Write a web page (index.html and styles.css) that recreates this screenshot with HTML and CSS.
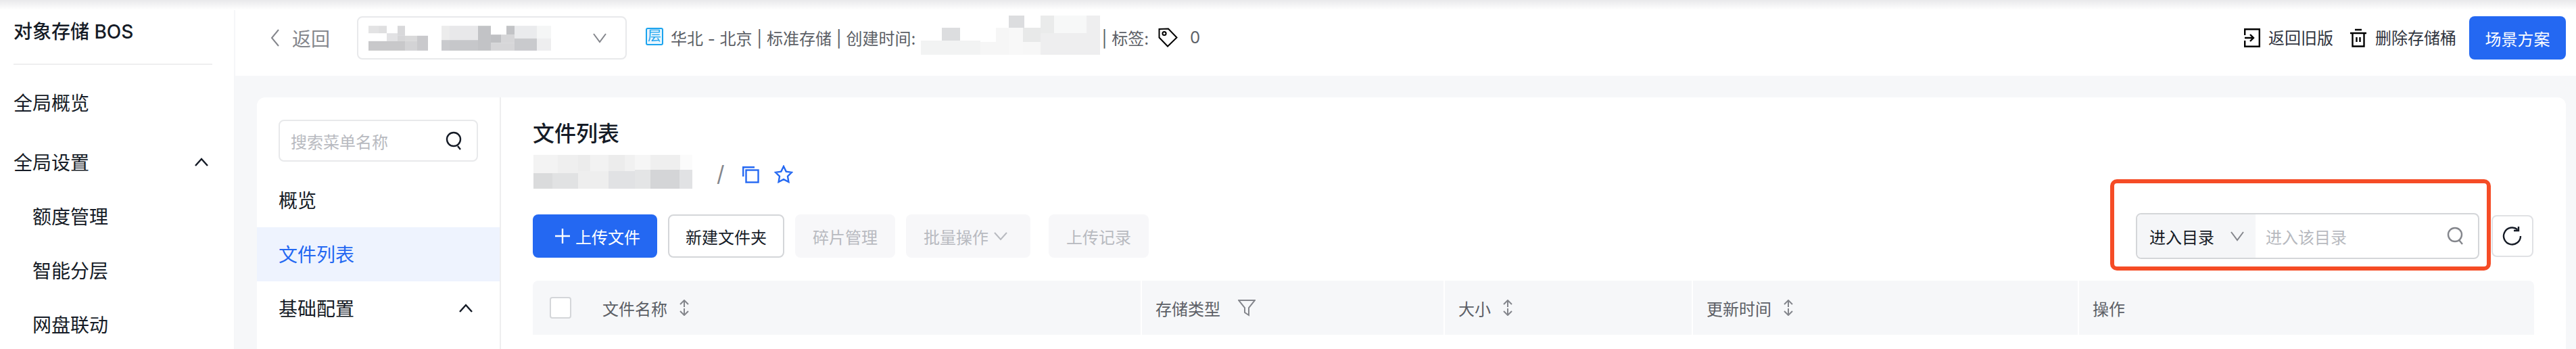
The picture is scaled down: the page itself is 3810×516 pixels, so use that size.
FILE: index.html
```html
<!DOCTYPE html>
<html lang="zh-CN">
<head>
  <meta charset="UTF-8" />
  <title>对象存储 BOS</title>
  <link rel="stylesheet" href="styles.css">
</head>
<body>
  <div class="top-shade"></div>
  <div class="page">
    <aside class="side">
      <div class="side-title">对象存储 BOS</div>
      <div class="side-line"></div>
      <div class="side-item first">全局概览</div>
      <div class="side-item group">全局设置
        <svg class="arrow-up" viewBox="0 0 20 14"><path d="M1 12L10 2l9 10"/></svg>
      </div>
      <div class="side-item sub">额度管理</div>
      <div class="side-item sub">智能分层</div>
      <div class="side-item sub">网盘联动</div>
    </aside>

    <div class="main">
      <header class="head">
        <svg class="back-icon" viewBox="0 0 14 28"><path d="M12 2L2 14l10 12"/></svg>
        <span class="back-text">返回</span>
        <div class="bucket-select">
          <svg class="mosaic mosaic-name" viewBox="45 54 810 110">
            <rect x="45" y="54" width="45" height="33" fill="#e3e3e4"/>
            <rect x="90" y="54" width="36" height="33" fill="#dfdfe0"/>
            <rect x="174" y="54" width="33" height="44" fill="#d8d8da"/>
            <rect x="126" y="87" width="48" height="35" fill="#e2e2e4"/>
            <rect x="174" y="98" width="33" height="24" fill="#d6d6d8"/>
            <rect x="207" y="98" width="54" height="24" fill="#d9d9da"/>
            <rect x="261" y="98" width="48" height="66" fill="#c9c9cc"/>
            <rect x="45" y="122" width="162" height="42" fill="#c8c8ca"/>
            <rect x="207" y="122" width="54" height="42" fill="#d3d3d5"/>
            <rect x="369" y="54" width="36" height="63" fill="#ececec"/>
            <rect x="405" y="54" width="126" height="63" fill="#e8e8ea"/>
            <rect x="531" y="54" width="57" height="110" fill="#c2c3c6"/>
            <rect x="588" y="93" width="45" height="36" fill="#bfc0c3"/>
            <rect x="633" y="93" width="60" height="36" fill="#d6d6d8"/>
            <rect x="657" y="54" width="36" height="39" fill="#c2c3c6"/>
            <rect x="693" y="54" width="99" height="56" fill="#eaebed"/>
            <rect x="792" y="54" width="63" height="56" fill="#f5f6f6"/>
            <rect x="369" y="117" width="36" height="47" fill="#c9cacd"/>
            <rect x="405" y="117" width="126" height="47" fill="#c6c7ca"/>
            <rect x="588" y="129" width="105" height="35" fill="#d6d6d8"/>
            <rect x="693" y="110" width="99" height="54" fill="#c9cacd"/>
            <rect x="792" y="110" width="63" height="54" fill="#eeeeef"/>
          </svg>
          <svg class="arrow-down" viewBox="0 0 20 24"><path d="M1 6l9 12 9-12"/></svg>
        </div>
        <span class="layer-icon">层</span>
        <span class="info">华北 - 北京 | 标准存储 | 创建时间:</span>
        <svg class="mosaic mosaic-date" viewBox="33 24 795 174">
          <rect x="126" y="78" width="81" height="57" fill="#dcdddf"/>
          <rect x="33" y="135" width="264" height="63" fill="#f2f3f3"/>
          <rect x="297" y="141" width="69" height="57" fill="#f6f6f6"/>
          <rect x="366" y="78" width="57" height="120" fill="#f6f6f6"/>
          <rect x="423" y="78" width="63" height="120" fill="#f8f8f8"/>
          <rect x="423" y="24" width="69" height="54" fill="#dcdddf"/>
          <rect x="486" y="78" width="78" height="63" fill="#e8e9e9"/>
          <rect x="486" y="141" width="78" height="57" fill="#f7f7f7"/>
          <rect x="564" y="24" width="60" height="78" fill="#eaebeb"/>
          <rect x="624" y="24" width="144" height="78" fill="#f7f8f8"/>
          <rect x="768" y="24" width="60" height="78" fill="#eeeeef"/>
          <rect x="564" y="102" width="264" height="96" fill="#eeeeef"/>
        </svg>
        <span class="info tags">| 标签:</span>
        <svg class="tag-icon" viewBox="0 0 29 29"><path d="M1.5 2L15 1.5l12.5 13L14 27.5 1.5 14.5z"/><circle cx="9" cy="8.5" r="2.6"/></svg>
        <span class="info tag-count">0</span>

        <div class="head-actions">
          <svg class="old-icon" viewBox="0 0 24 28"><path d="M1.2 10V1.2h21.6v25.6H1.2V18M1 14h13M9 9l5 5-5 5"/></svg>
          <span class="head-link">返回旧版</span>
          <svg class="trash-icon" viewBox="0 0 26 28"><path d="M1 7h24M8 2h10M4.5 7v19.500h17V7M10.500 13v7M15.500 13v7"/></svg>
          <span class="head-link">删除存储桶</span>
          <button class="btn btn-primary scene-btn">场景方案</button>
        </div>
      </header>

      <div class="content">
        <div class="card">
          <nav class="menu">
            <div class="menu-search">
              <span class="placeholder">搜索菜单名称</span>
              <svg class="search-icon dark" viewBox="0 0 26 28"><circle cx="12" cy="12" r="10"/><path d="M18 22l4 5"/></svg>
            </div>
            <div class="menu-item">概览</div>
            <div class="menu-item active">文件列表</div>
            <div class="menu-item group">基础配置
              <svg class="arrow-up" viewBox="0 0 20 14"><path d="M1 12L10 2l9 10"/></svg>
            </div>
          </nav>

          <section class="panel">
            <h2 class="panel-title">文件列表</h2>
            <div class="path-row">
              <svg class="mosaic mosaic-path" viewBox="27 27 705 150">
                <rect x="27" y="27" width="108" height="81" fill="#f3f3f3"/>
                <rect x="135" y="27" width="90" height="81" fill="#efefef"/>
                <rect x="225" y="27" width="54" height="81" fill="#ececec"/>
                <rect x="279" y="27" width="81" height="72" fill="#f2f2f2"/>
                <rect x="360" y="27" width="72" height="72" fill="#ececec"/>
                <rect x="432" y="27" width="45" height="72" fill="#f1f1f1"/>
                <rect x="477" y="27" width="69" height="66" fill="#f6f6f6"/>
                <rect x="546" y="27" width="132" height="66" fill="#efefef"/>
                <rect x="678" y="27" width="54" height="66" fill="#fbfbfb"/>
                <rect x="27" y="108" width="84" height="69" fill="#dadbdc"/>
                <rect x="111" y="108" width="114" height="69" fill="#e1e2e3"/>
                <rect x="225" y="99" width="135" height="78" fill="#eeeeee"/>
                <rect x="360" y="99" width="117" height="78" fill="#e1e2e4"/>
                <rect x="477" y="93" width="69" height="84" fill="#e4e5e6"/>
                <rect x="546" y="93" width="129" height="84" fill="#d4d5d7"/>
                <rect x="675" y="93" width="57" height="84" fill="#e1e2e4"/>
              </svg>
              <span class="path-slash">/</span>
              <svg class="copy-icon" viewBox="0 0 25 25"><path d="M1.200 15V1.200H18"/><rect x="5.500" y="5.500" width="18" height="18"/></svg>
              <svg class="star-icon" viewBox="0 0 28 27"><path d="M14 2l3.700 7.600 8.300 1.200-6 5.900 1.400 8.300-7.400-3.900-7.400 3.900L8 16.700l-6-5.900 8.300-1.200z"/></svg>
            </div>

            <div class="toolbar">
              <div class="toolbar-left">
                <button class="btn btn-primary upload-btn">
                  <svg class="plus-icon" viewBox="0 0 22 22"><path d="M0 11h22M11 0v22"/></svg>
                  上传文件
                </button>
                <button class="btn btn-outline">新建文件夹</button>
                <button class="btn btn-disabled">碎片管理</button>
                <button class="btn btn-disabled batch-btn">批量操作
                  <svg class="arrow-down" viewBox="0 0 20 24"><path d="M1 7l9 10 9-10"/></svg>
                </button>
                <button class="btn btn-disabled log-btn">上传记录</button>
              </div>
              <div class="toolbar-right">
                <div class="dir-search">
                  <div class="dir-select">进入目录
                    <svg class="arrow-down" viewBox="0 0 20 24"><path d="M1 6l9 12 9-12"/></svg>
                  </div>
                  <span class="placeholder dir-input">进入该目录</span>
                  <svg class="search-icon" viewBox="0 0 26 28"><circle cx="12" cy="12" r="10"/><path d="M18 20l5 6"/></svg>
                  <div class="highlight"></div>
                </div>
                <button class="refresh-btn">
                  <svg class="refresh-icon" viewBox="0 0 30 30"><path d="M27 15a12.500 12.500 0 1 1-4.500-9.600"/><path d="M24 1v6h-7"/></svg>
                </button>
              </div>
            </div>

            <div class="table-head">
              <div class="cell name-cell">
                <span class="checkbox"></span>
                文件名称
                <svg class="sort-icon" viewBox="0 0 14 24"><path d="M1 7l6-6 6 6M7 1v10M1 17l6 6 6-6M7 13v10"/></svg>
              </div>
              <div class="cell">存储类型
                <svg class="filter-icon" viewBox="0 0 26 26"><path d="M1 2h24l-9 11v11l-6-4v-7z"/></svg>
              </div>
              <div class="cell">大小
                <svg class="sort-icon" viewBox="0 0 14 24"><path d="M1 7l6-6 6 6M7 1v10M1 17l6 6 6-6M7 13v10"/></svg>
              </div>
              <div class="cell">更新时间
                <svg class="sort-icon" viewBox="0 0 14 24"><path d="M1 7l6-6 6 6M7 1v10M1 17l6 6 6-6M7 13v10"/></svg>
              </div>
              <div class="cell">操作</div>
            </div>
          </section>
        </div>
      </div>
    </div>
  </div>
</body>
</html>
```

FILE: styles.css
```css
* {
  box-sizing: border-box;
}
html, body {
  margin: 0;
  padding: 0;
  height: 516px;
  overflow: hidden;
}
body {
  position: relative;
  font-family: "Inter", "Noto Sans CJK SC", sans-serif;
  font-size: 24px;
  color: #151b26;
  background-color: #ffffff;
}
svg {
  display: block;
  flex: none;
  fill: none;
}
button {
  font-family: inherit;
}
.top-shade {
  position: absolute;
  left: 0;
  top: 0;
  width: 100%;
  height: 15px;
  background: linear-gradient(#e9e9eb, #ffffff);
}
.page {
  display: flex;
  height: 516px;
}

/* left nav */
.side {
  flex: none;
  width: 348px;
  padding: 0 32px 0 20px;
  border-right: 2px solid #f5f6f8;
  font-size: 28px;
}
.side-title {
  height: 94px;
  line-height: 94px;
  font-weight: 500;
}
.side-line {
  height: 2px;
  background-color: #eeeeef;
}
.side-item {
  display: flex;
  align-items: center;
  justify-content: space-between;
  height: 80px;
  padding-bottom: 3px;
}
.side-item.first {
  margin-top: 16px;
  margin-bottom: 8px;
}
.side-item.sub {
  padding-left: 28px;
}
.arrow-up {
  width: 20px;
  height: 14px;
  margin-right: 6px;
  margin-top: 3px;
  stroke: #151b26;
  stroke-width: 2.5;
}
.arrow-down {
  width: 20px;
  height: 24px;
  stroke: #84868c;
  stroke-width: 2;
}

/* top bar */
.main {
  flex: 1;
  min-width: 0;
  display: flex;
  flex-direction: column;
}
.head {
  flex: none;
  display: flex;
  align-items: center;
  height: 112px;
  padding: 0 15px 0 52px;
}
.back-icon {
  width: 14px;
  height: 28px;
  stroke: #84868c;
  stroke-width: 2;
}
.back-text {
  margin-left: 18px;
  font-size: 28px;
  color: #84868c;
}
.bucket-select {
  display: flex;
  align-items: center;
  justify-content: space-between;
  width: 399px;
  height: 64px;
  margin-left: 40px;
  padding: 0 28px 0 15px;
  border: 2px solid #e8e9eb;
  border-radius: 8px;
  background-color: #ffffff;
}
.mosaic-name {
  width: 270px;
  height: 37px;
}
.layer-icon {
  flex: none;
  width: 26px;
  height: 26px;
  margin-left: 28px;
  margin-top: -4px;
  border: 2px solid #1aa3ee;
  border-radius: 3px;
  background-color: #e8f6fe;
  font-size: 20px;
  line-height: 21px;
  text-align: center;
  color: #1aa3ee;
}
.info {
  flex: none;
  margin-left: 11px;
  margin-top: -2px;
  color: #5c5f66;
}
.mosaic-date {
  width: 265px;
  height: 58px;
  margin-left: 8px;
  margin-top: -8px;
}
.info.tags {
  margin-left: 2px;
}
.tag-icon {
  width: 29px;
  height: 29px;
  margin-left: 14px;
  margin-top: -2px;
  stroke: #000000;
  stroke-width: 2;
}
.info.tag-count {
  margin-left: 18px;
}
.head-actions {
  display: flex;
  align-items: center;
  margin-left: auto;
}
.old-icon {
  width: 24px;
  height: 28px;
  stroke: #000000;
  stroke-width: 2.4;
}
.trash-icon {
  width: 26px;
  height: 28px;
  margin-left: 24px;
  stroke: #000000;
  stroke-width: 2.4;
}
.head-link {
  margin-left: 12px;
  margin-top: -4px;
  color: #303540;
}
.btn {
  height: 64px;
  padding: 0 26px;
  border: none;
  border-radius: 8px;
  font-size: 24px;
}
.btn-primary {
  background-color: #2468f2;
  color: #ffffff;
}
.scene-btn {
  width: 143px;
  margin-left: 19px;
  padding: 0;
}

/* content */
.content {
  flex: 1;
  min-height: 0;
  padding: 32px 15px 0 32px;
  background-color: #f6f7f9;
}
.card {
  display: flex;
  height: 100%;
  border-radius: 12px 12px 0 0;
  overflow: hidden;
  background-color: #ffffff;
}
.menu {
  flex: none;
  width: 361px;
  padding-top: 33px;
  border-right: 2px solid #eeeeef;
  font-size: 28px;
}
.menu-search {
  display: flex;
  align-items: center;
  justify-content: space-between;
  width: 295px;
  height: 62px;
  margin: 0 0 17px 32px;
  padding: 0 20px 0 16px;
  border: 2px solid #e8e9eb;
  border-radius: 8px;
}
.placeholder {
  font-size: 24px;
  color: #b8bac0;
}
.search-icon {
  width: 26px;
  height: 28px;
  stroke: #84868c;
  stroke-width: 2.4;
}
.search-icon.dark {
  stroke: #151b26;
}
.menu-item {
  display: flex;
  align-items: center;
  justify-content: space-between;
  height: 80px;
  padding: 0 34px 3px 32px;
}
.menu-item.active {
  background-color: #eef3fe;
  color: #2468f2;
}
.panel {
  flex: 1;
  min-width: 0;
  padding: 32px 47px 0 47px;
}
.panel-title {
  margin: 0;
  font-size: 32px;
  font-weight: 500;
  line-height: 44px;
}
.path-row {
  display: flex;
  align-items: center;
  height: 50px;
  margin-top: 9px;
}
.mosaic-path {
  width: 235px;
  height: 50px;
  margin-left: 1px;
}
.path-slash {
  margin-left: 36px;
  margin-top: 4px;
  font-size: 32px;
  color: #84868c;
}
.copy-icon {
  width: 25px;
  height: 25px;
  margin-left: 26px;
  margin-top: 8px;
  stroke: #2468f2;
  stroke-width: 2.400;
}
.star-icon {
  width: 28px;
  height: 27px;
  margin-left: 22px;
  margin-top: 6px;
  stroke: #2468f2;
  stroke-width: 2.400;
}

/* toolbar */
.toolbar {
  display: flex;
  align-items: center;
  justify-content: space-between;
  height: 64px;
  margin-top: 38px;
}
.toolbar-left {
  display: flex;
  align-items: center;
  gap: 16px;
}
.upload-btn {
  display: flex;
  align-items: center;
  gap: 8px;
  width: 184px;
  padding: 0 0 0 33px;
}
.plus-icon {
  width: 22px;
  height: 22px;
  stroke: #ffffff;
  stroke-width: 2.400;
}
.btn-outline {
  border: 2px solid #d4d6d9;
  background-color: #ffffff;
  color: #151b26;
  padding: 0 24px;
}
.btn-disabled {
  background-color: #f7f7f9;
  color: #b8bac0;
}
.batch-btn {
  display: flex;
  align-items: center;
  gap: 8px;
  width: 184px;
}
.batch-btn .arrow-down {
  stroke: #b8bac0;
}
.log-btn {
  margin-left: 11px;
}
.toolbar-right {
  display: flex;
  align-items: center;
  gap: 18px;
  margin-right: 1px;
}
.dir-search {
  position: relative;
  display: flex;
  align-items: center;
  width: 508px;
  height: 68px;
  padding-right: 20px;
  border: 2px solid #d4d6d9;
  border-radius: 8px;
}
.dir-select {
  display: flex;
  align-items: center;
  height: 100%;
  width: 175px;
  padding-left: 18px;
  gap: 24px;
  background-color: #f5f6f8;
  border-radius: 6px 0 0 6px;
}
.dir-input {
  flex: 1;
  margin-left: 15px;
}
/* red annotation frame from the screenshot */
.highlight {
  position: absolute;
  left: -40px;
  top: -52px;
  right: -19px;
  bottom: -19px;
  border: 6px solid #f54c26;
  border-radius: 10px;
}
.refresh-btn {
  display: flex;
  align-items: center;
  justify-content: center;
  width: 62px;
  height: 62px;
  padding: 0;
  border: 2px solid #e0e1e4;
  border-radius: 8px;
  background-color: #ffffff;
}
.refresh-icon {
  width: 30px;
  height: 30px;
  stroke: #151b26;
  stroke-width: 2.400;
}

/* table header */
.table-head {
  display: grid;
  grid-template-columns: 899px 448px 367px 571px 675px;
  height: 80px;
  margin-top: 34px;
  border-radius: 8px 8px 0 0;
  overflow: hidden;
  background-color: #f6f7f9;
  color: #5c5f66;
}
.cell {
  display: flex;
  align-items: center;
  padding-left: 20px;
  border-left: 2px solid #ffffff;
}
.name-cell {
  padding-left: 25px;
  border-left: none;
}
.checkbox {
  width: 32px;
  height: 32px;
  margin-right: 46px;
  border: 2px solid #d4d6d9;
  border-radius: 4px;
  background-color: #ffffff;
}
.sort-icon {
  width: 14px;
  height: 24px;
  margin-left: 18px;
  stroke: #84868c;
  stroke-width: 2;
}
.filter-icon {
  width: 26px;
  height: 26px;
  margin-left: 26px;
  stroke: #84868c;
  stroke-width: 2;
}
```
